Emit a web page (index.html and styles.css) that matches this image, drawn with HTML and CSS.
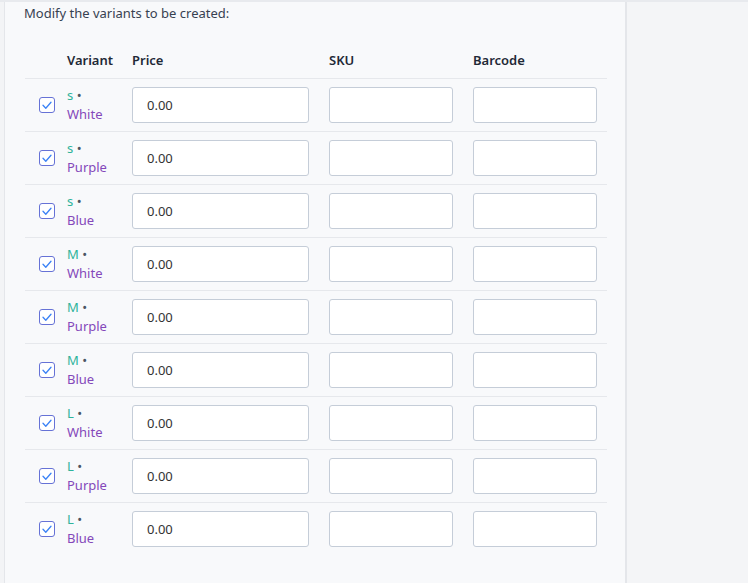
FILE: index.html
```html
<!DOCTYPE html>
<html lang="en">
<head>
  <meta charset="UTF-8" />
  <meta name="viewport" content="width=device-width, initial-scale=1.0"/>
  <title>Variants</title>
  <link rel="stylesheet" href="styles.css">
</head>
<body>

  <div class="gutter"></div>

  <div class="panel">
    <div class="panel-title">Modify the variants to be created:</div>

    <table class="variants">
      <colgroup>
        <col class="col-check">
        <col class="col-variant">
        <col class="col-price">
        <col class="col-sku">
        <col class="col-barcode">
      </colgroup>
      <thead>
        <tr>
          <th></th>
          <th>Variant</th>
          <th>Price</th>
          <th>SKU</th>
          <th>Barcode</th>
        </tr>
      </thead>
      <tbody id="rows"></tbody>
    </table>
  </div>

  <div class="aside"></div>

  <script>
    const sizes = ['s', 'M', 'L'];
    const colors = ['White', 'Purple', 'Blue'];
    const rows = document.getElementById('rows');

    const check = '<svg viewBox="0 0 16 16" width="16" height="16"><polyline points="4,8.3 6.8,11.2 12,5.2" fill="none" stroke="#3b82f6" stroke-width="1.3" stroke-linecap="round" stroke-linejoin="round"/></svg>';

    sizes.forEach(size => {
      colors.forEach(color => {
        const tr = document.createElement('tr');
        tr.innerHTML = `
          <td><span class="checkbox">${check}</span></td>
          <td>
            <div class="variant-name">
              <div><span class="size">${size}</span> <span class="dot">•</span></div>
              <div class="color">${color}</div>
            </div>
          </td>
          <td><input class="field field-price" type="text" value="0.00"></td>
          <td><input class="field" type="text"></td>
          <td><input class="field" type="text"></td>`;
        rows.appendChild(tr);
      });
    });
  </script>

</body>
</html>
```

FILE: styles.css
```css
body {
  margin: 0;
  background: #f3f4f6;
  font-family: 'Noto Sans', 'Open Sans', sans-serif;
  display: flex;
  min-height: 583px;
  border-top: 2px solid #e8eaee;
  box-sizing: border-box;
  overflow: hidden;
}

.gutter {
  width: 4px;
  background: #f3f4f6;
  border-right: 1px solid #e4e6ea;
}

.panel {
  width: 622px;
  background: #f8f9fb;
  border-right: 2px solid #e4e6ea;
  padding: 1px 0 0 19px;
  box-sizing: border-box;
}

.panel-title {
  font-size: 13px;
  line-height: 20px;
  color: #374151;
}

.aside {
  flex: 1;
  background: #f4f5f7;
}

.variants {
  margin: 19px 0 0 1px;
  width: 582px;
  table-layout: fixed;
  border-collapse: collapse;
}

.col-check { width: 42px; }
.col-variant { width: 65px; }
.col-price { width: 197px; }
.col-sku { width: 144px; }
.col-barcode { width: 134px; }

.variants th {
  height: 36px;
  padding: 0;
  text-align: left;
  font-size: 13px;
  font-weight: 600;
  color: #1f2937;
  vertical-align: middle;
}

.variants td {
  padding: 8px 0;
  border-top: 1px solid #e6e8ec;
  vertical-align: middle;
}

.checkbox {
  display: block;
  margin-left: 14px;
  width: 16px;
  height: 16px;
  box-sizing: border-box;
  border: 1.5px solid #6672d6;
  border-radius: 3px;
  background: #fff;
  position: relative;
}

.checkbox svg {
  position: absolute;
  left: -1.5px;
  top: -1.5px;
}

.variant-name {
  height: 36px;
  font-size: 13px;
  line-height: 19px;
  margin-top: -2px;
  overflow: visible;
}

.size {
  color: #2fb39a;
}

.dot {
  color: #4b5563;
}

.color {
  color: #8448ba;
}

.field {
  display: block;
  box-sizing: border-box;
  width: 124px;
  height: 36px;
  border: 1px solid #c5cdd8;
  border-radius: 3px;
  background: #fff;
  padding: 0 14px;
  font-family: 'Noto Sans', 'Open Sans', sans-serif;
  font-size: 13px;
  color: #333;
  outline: none;
}

.field-price {
  width: 177px;
}
```
